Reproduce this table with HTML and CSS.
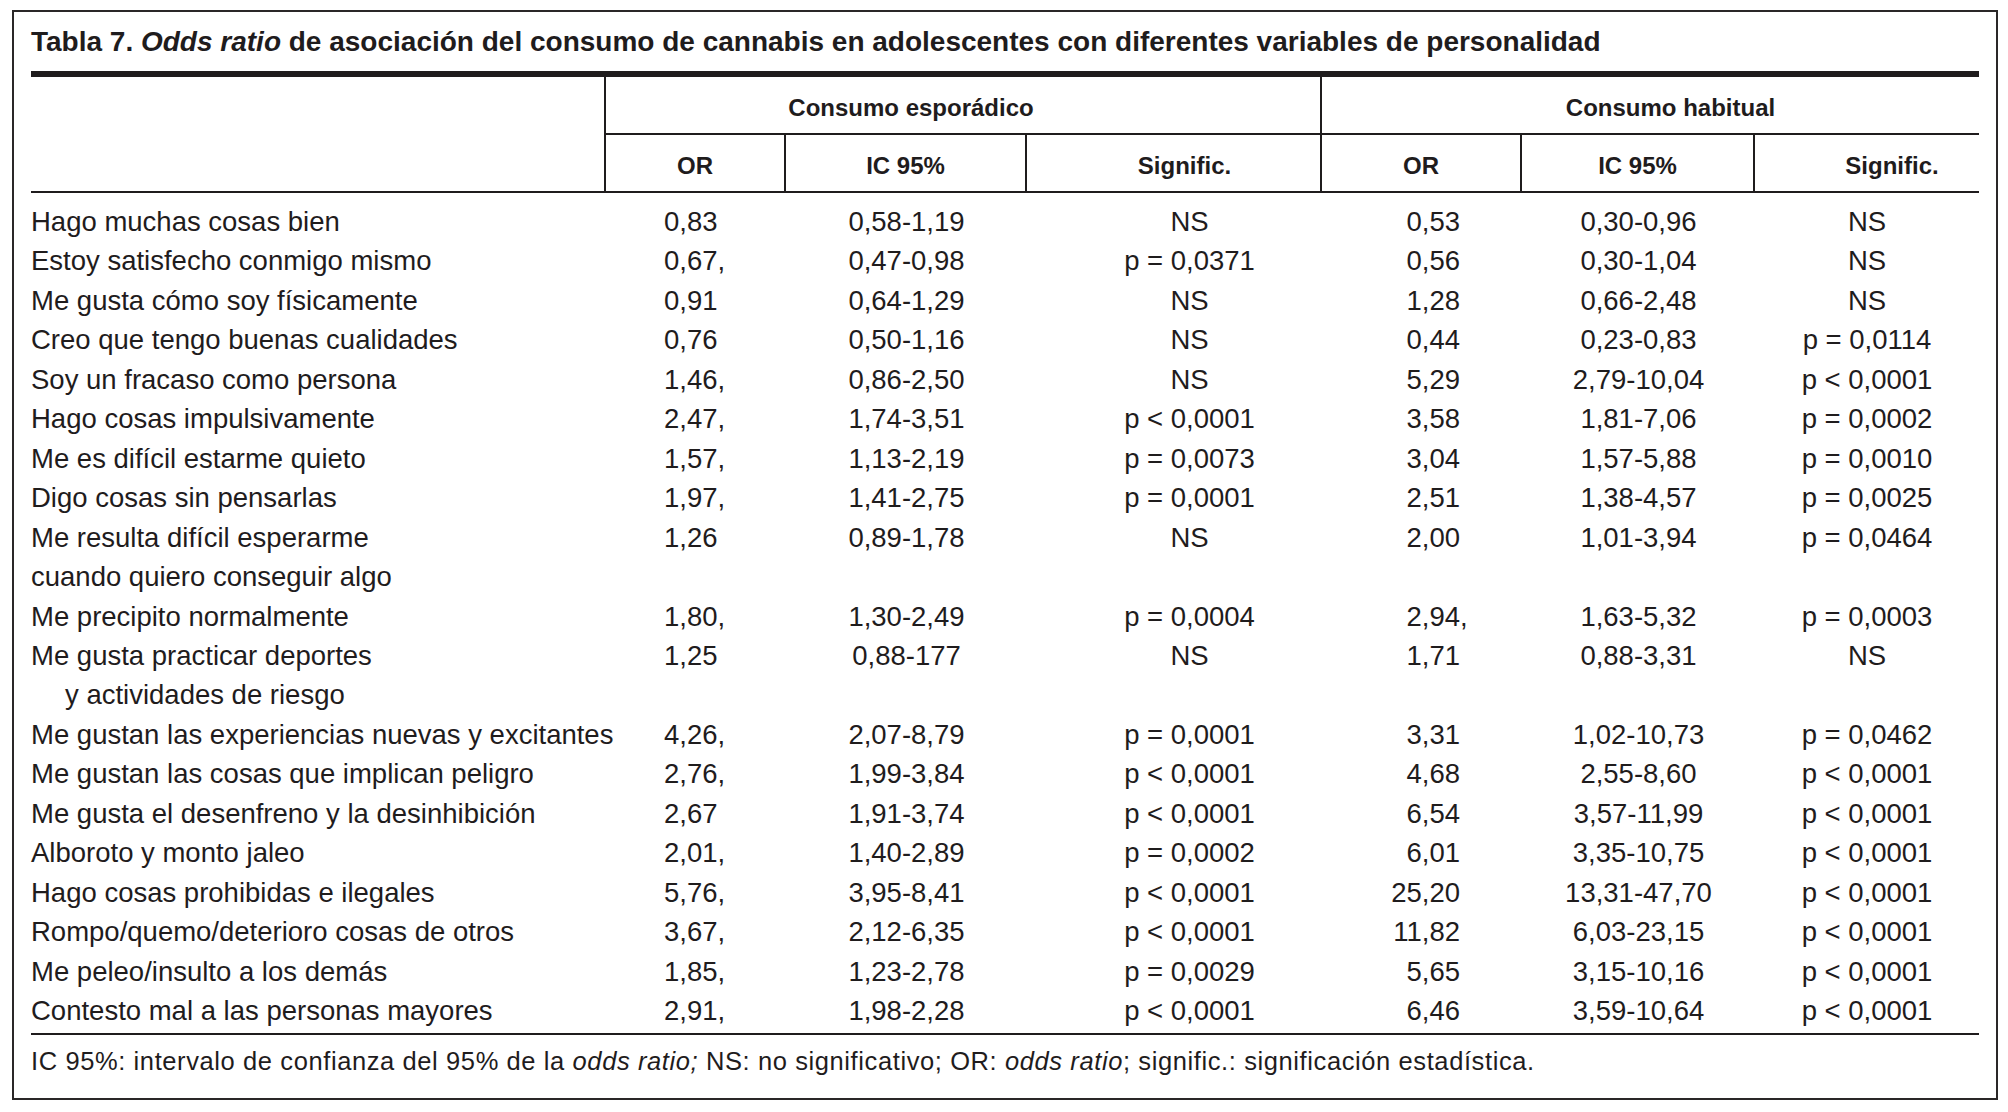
FILE: index.html
```html
<!DOCTYPE html>
<html lang="es">
<head>
<meta charset="utf-8">
<title>Tabla 7</title>
<link rel="stylesheet" href="styles.css">
</head>
<body>
<div class="frame">
  <h1 class="title">Tabla 7. <i>Odds ratio</i> de asociación del consumo de cannabis en adolescentes con diferentes variables de personalidad</h1>
  <table class="or-table">
    <colgroup>
      <col class="c-label"><col class="c-or1"><col class="c-ic1"><col class="c-sig1"><col class="c-or2"><col class="c-ic2"><col class="c-sig2">
    </colgroup>
    <thead>
      <tr class="group-row">
        <th class="blank" rowspan="2"></th>
        <th class="group g1" colspan="3">Consumo esporádico</th>
        <th class="group g2" colspan="3">Consumo habitual</th>
      </tr>
      <tr class="sub-row">
        <th class="sep">OR</th>
        <th class="sep">IC 95%</th>
        <th class="sep sig1">Signific.</th>
        <th class="sep">OR</th>
        <th class="sep">IC 95%</th>
        <th class="sig2">Signific.</th>
      </tr>
    </thead>
    <tbody>
      <tr><td class="lbl">Hago muchas cosas bien</td><td class="or1">0,83</td><td class="ic">0,58-1,19</td><td class="sig1">NS</td><td class="or2">0,53</td><td class="ic">0,30-0,96</td><td class="sig2">NS</td></tr>
      <tr><td class="lbl">Estoy satisfecho conmigo mismo</td><td class="or1">0,67,</td><td class="ic">0,47-0,98</td><td class="sig1">p = 0,0371</td><td class="or2">0,56</td><td class="ic">0,30-1,04</td><td class="sig2">NS</td></tr>
      <tr><td class="lbl">Me gusta cómo soy físicamente</td><td class="or1">0,91</td><td class="ic">0,64-1,29</td><td class="sig1">NS</td><td class="or2">1,28</td><td class="ic">0,66-2,48</td><td class="sig2">NS</td></tr>
      <tr><td class="lbl">Creo que tengo buenas cualidades</td><td class="or1">0,76</td><td class="ic">0,50-1,16</td><td class="sig1">NS</td><td class="or2">0,44</td><td class="ic">0,23-0,83</td><td class="sig2">p = 0,0114</td></tr>
      <tr><td class="lbl">Soy un fracaso como persona</td><td class="or1">1,46,</td><td class="ic">0,86-2,50</td><td class="sig1">NS</td><td class="or2">5,29</td><td class="ic">2,79-10,04</td><td class="sig2">p &lt; 0,0001</td></tr>
      <tr><td class="lbl">Hago cosas impulsivamente</td><td class="or1">2,47,</td><td class="ic">1,74-3,51</td><td class="sig1">p &lt; 0,0001</td><td class="or2">3,58</td><td class="ic">1,81-7,06</td><td class="sig2">p = 0,0002</td></tr>
      <tr><td class="lbl">Me es difícil estarme quieto</td><td class="or1">1,57,</td><td class="ic">1,13-2,19</td><td class="sig1">p = 0,0073</td><td class="or2">3,04</td><td class="ic">1,57-5,88</td><td class="sig2">p = 0,0010</td></tr>
      <tr><td class="lbl">Digo cosas sin pensarlas</td><td class="or1">1,97,</td><td class="ic">1,41-2,75</td><td class="sig1">p = 0,0001</td><td class="or2">2,51</td><td class="ic">1,38-4,57</td><td class="sig2">p = 0,0025</td></tr>
      <tr><td class="lbl">Me resulta difícil esperarme<br>cuando quiero conseguir algo</td><td class="or1">1,26</td><td class="ic">0,89-1,78</td><td class="sig1">NS</td><td class="or2">2,00</td><td class="ic">1,01-3,94</td><td class="sig2">p = 0,0464</td></tr>
      <tr><td class="lbl">Me precipito normalmente</td><td class="or1">1,80,</td><td class="ic">1,30-2,49</td><td class="sig1">p = 0,0004</td><td class="or2">2,94<span class="hang">,</span></td><td class="ic">1,63-5,32</td><td class="sig2">p = 0,0003</td></tr>
      <tr><td class="lbl">Me gusta practicar deportes<br><span class="indent">y actividades de riesgo</span></td><td class="or1">1,25</td><td class="ic">0,88-177</td><td class="sig1">NS</td><td class="or2">1,71</td><td class="ic">0,88-3,31</td><td class="sig2">NS</td></tr>
      <tr><td class="lbl">Me gustan las experiencias nuevas y excitantes</td><td class="or1">4,26,</td><td class="ic">2,07-8,79</td><td class="sig1">p = 0,0001</td><td class="or2">3,31</td><td class="ic">1,02-10,73</td><td class="sig2">p = 0,0462</td></tr>
      <tr><td class="lbl">Me gustan las cosas que implican peligro</td><td class="or1">2,76,</td><td class="ic">1,99-3,84</td><td class="sig1">p &lt; 0,0001</td><td class="or2">4,68</td><td class="ic">2,55-8,60</td><td class="sig2">p &lt; 0,0001</td></tr>
      <tr><td class="lbl">Me gusta el desenfreno y la desinhibición</td><td class="or1">2,67</td><td class="ic">1,91-3,74</td><td class="sig1">p &lt; 0,0001</td><td class="or2">6,54</td><td class="ic">3,57-11,99</td><td class="sig2">p &lt; 0,0001</td></tr>
      <tr><td class="lbl">Alboroto y monto jaleo</td><td class="or1">2,01,</td><td class="ic">1,40-2,89</td><td class="sig1">p = 0,0002</td><td class="or2">6,01</td><td class="ic">3,35-10,75</td><td class="sig2">p &lt; 0,0001</td></tr>
      <tr><td class="lbl">Hago cosas prohibidas e ilegales</td><td class="or1">5,76,</td><td class="ic">3,95-8,41</td><td class="sig1">p &lt; 0,0001</td><td class="or2">25,20</td><td class="ic">13,31-47,70</td><td class="sig2">p &lt; 0,0001</td></tr>
      <tr><td class="lbl">Rompo/quemo/deterioro cosas de otros</td><td class="or1">3,67,</td><td class="ic">2,12-6,35</td><td class="sig1">p &lt; 0,0001</td><td class="or2">11,82</td><td class="ic">6,03-23,15</td><td class="sig2">p &lt; 0,0001</td></tr>
      <tr><td class="lbl">Me peleo/insulto a los demás</td><td class="or1">1,85,</td><td class="ic">1,23-2,78</td><td class="sig1">p = 0,0029</td><td class="or2">5,65</td><td class="ic">3,15-10,16</td><td class="sig2">p &lt; 0,0001</td></tr>
      <tr><td class="lbl">Contesto mal a las personas mayores</td><td class="or1">2,91,</td><td class="ic">1,98-2,28</td><td class="sig1">p &lt; 0,0001</td><td class="or2">6,46</td><td class="ic">3,59-10,64</td><td class="sig2">p &lt; 0,0001</td></tr>
    </tbody>
  </table>
  <p class="note">IC 95%: intervalo de confianza del 95% de la <i>odds ratio;</i> NS: no significativo; OR: <i>odds ratio</i>; signific.: significación estadística.</p>
</div>
</body>
</html>
```
FILE: styles.css
```css
html, body {
  margin: 0;
  padding: 0;
  background: #ffffff;
}

body {
  padding: 10px 0 0 12px;
  color: #1f1c1d;
  font-family: "Liberation Sans", Arial, sans-serif;
}

.frame {
  width: 1948px;
  border: 2px solid #2a2728;
  padding: 12px 17px 22px 17px;
}

.title {
  margin: 0;
  font-size: 28px;
  line-height: 36px;
  font-weight: bold;
  white-space: nowrap;
}

.title i {
  font-style: italic;
}

.or-table {
  margin-top: 11px;
  width: 1948px;
  table-layout: fixed;
  border-collapse: separate;
  border-spacing: 0;
  border-top: 6px solid #1f1c1d;
  border-bottom: 2px solid #1f1c1d;
}

.c-label { width: 575px; }
.c-or1 { width: 180px; }
.c-ic1 { width: 241px; }
.c-sig1 { width: 295px; }
.c-or2 { width: 200px; }
.c-ic2 { width: 233px; }
.c-sig2 { width: 224px; }

.or-table th {
  font-weight: bold;
  font-size: 24px;
  line-height: 50px;
  padding: 6px 0 0 0;
  text-align: center;
  white-space: nowrap;
}

.or-table th.blank {
  border-right: 2px solid #1f1c1d;
  border-bottom: 2px solid #1f1c1d;
}

.or-table th.group {
  border-bottom: 2px solid #1f1c1d;
}

.or-table th.g1 {
  border-right: 2px solid #1f1c1d;
  padding-right: 104px;
}

.or-table th.g2 {
  padding-left: 40px;
}

.sub-row th {
  border-bottom: 2px solid #1f1c1d;
}

.sub-row th.sep {
  border-right: 2px solid #1f1c1d;
}

.sub-row th.sig1 {
  padding-left: 22px;
}

.sub-row th.sig2 {
  padding-left: 50px;
}

.or-table td {
  font-size: 27.5px;
  line-height: 39.45px;
  padding: 0;
  vertical-align: top;
  white-space: nowrap;
}

.or-table tbody tr:first-child td {
  padding-top: 9px;
}

.or-table tbody tr:last-child td {
  padding-bottom: 2px;
}

.lbl {
  text-align: left;
}

.indent {
  display: inline-block;
  margin-left: 34px;
}

.or-table td.or1 {
  text-align: left;
  padding-left: 58px;
}

.or-table td.ic {
  text-align: center;
}

.or-table td.sig1 {
  text-align: center;
  padding-left: 30px;
}

.or-table td.or2 {
  text-align: right;
  padding-right: 62px;
}

.hang {
  margin-right: -0.278em;
}

.or-table td.sig2 {
  text-align: center;
}

.note {
  margin: 11.5px 0 0 0;
  font-size: 25.5px;
  line-height: 30px;
  letter-spacing: 0.6px;
  white-space: nowrap;
}

.note i {
  font-style: italic;
}
```
